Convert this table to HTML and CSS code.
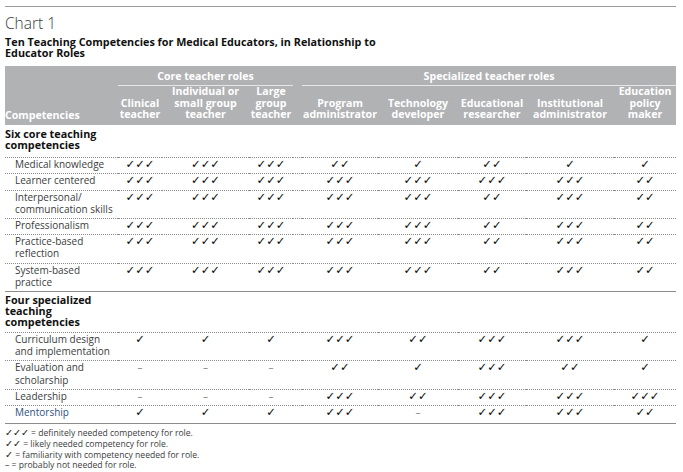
FILE: index.html
```html
<!DOCTYPE html>
<html lang="en">
<head>
<meta charset="utf-8">
<title>Chart 1</title>
<link rel="stylesheet" href="styles.css">
</head>
<body>
<div class="page">
  <div class="rule-top"></div>
  <h1 class="chart-label">Chart 1</h1>
  <h2 class="chart-title">Ten Teaching Competencies for Medical Educators, in Relationship to<br>Educator Roles</h2>
  <table class="comp-table">
    <colgroup>
      <col class="w-comp">
      <col class="w-clin">
      <col class="w-indiv">
      <col class="w-large">
      <col class="w-gap">
      <col class="w-prog">
      <col class="w-tech">
      <col class="w-edu">
      <col class="w-inst">
      <col class="w-policy">
    </colgroup>
    <thead>
      <tr class="group-row">
        <th rowspan="2" class="h-comp">Competencies</th>
        <th colspan="3" class="h-group">Core teacher roles</th>
        <th rowspan="2" class="h-gap"></th>
        <th colspan="5" class="h-group">Specialized teacher roles</th>
      </tr>
      <tr class="role-row">
        <th class="h-role">Clinical<br>teacher</th>
        <th class="h-role">Individual or<br>small group<br>teacher</th>
        <th class="h-role">Large<br>group<br>teacher</th>
        <th class="h-role">Program<br>administrator</th>
        <th class="h-role">Technology<br>developer</th>
        <th class="h-role">Educational<br>researcher</th>
        <th class="h-role">Institutional<br>administrator</th>
        <th class="h-role">Education<br>policy<br>maker</th>
      </tr>
    </thead>
    <tbody>
      <tr class="section first">
        <th colspan="10">Six core teaching<br>competencies</th>
      </tr>
      <tr>
        <td class="label">Medical knowledge</td>
        <td class="mark">✓✓✓</td><td class="mark">✓✓✓</td><td class="mark">✓✓✓</td><td class="gap"></td>
        <td class="mark">✓✓</td><td class="mark">✓</td><td class="mark">✓✓</td><td class="mark">✓</td><td class="mark">✓</td>
      </tr>
      <tr>
        <td class="label">Learner centered</td>
        <td class="mark">✓✓✓</td><td class="mark">✓✓✓</td><td class="mark">✓✓✓</td><td class="gap"></td>
        <td class="mark">✓✓✓</td><td class="mark">✓✓✓</td><td class="mark">✓✓✓</td><td class="mark">✓✓✓</td><td class="mark">✓✓</td>
      </tr>
      <tr>
        <td class="label">Interpersonal/<br>communication skills</td>
        <td class="mark">✓✓✓</td><td class="mark">✓✓✓</td><td class="mark">✓✓✓</td><td class="gap"></td>
        <td class="mark">✓✓✓</td><td class="mark">✓✓✓</td><td class="mark">✓✓</td><td class="mark">✓✓✓</td><td class="mark">✓✓</td>
      </tr>
      <tr>
        <td class="label">Professionalism</td>
        <td class="mark">✓✓✓</td><td class="mark">✓✓✓</td><td class="mark">✓✓✓</td><td class="gap"></td>
        <td class="mark">✓✓✓</td><td class="mark">✓✓✓</td><td class="mark">✓✓</td><td class="mark">✓✓✓</td><td class="mark">✓✓</td>
      </tr>
      <tr>
        <td class="label">Practice-based<br>reflection</td>
        <td class="mark">✓✓✓</td><td class="mark">✓✓✓</td><td class="mark">✓✓✓</td><td class="gap"></td>
        <td class="mark">✓✓✓</td><td class="mark">✓✓✓</td><td class="mark">✓✓</td><td class="mark">✓✓✓</td><td class="mark">✓✓</td>
      </tr>
      <tr>
        <td class="label">System-based<br>practice</td>
        <td class="mark">✓✓✓</td><td class="mark">✓✓✓</td><td class="mark">✓✓✓</td><td class="gap"></td>
        <td class="mark">✓✓✓</td><td class="mark">✓✓✓</td><td class="mark">✓✓</td><td class="mark">✓✓✓</td><td class="mark">✓✓</td>
      </tr>
      <tr class="section second">
        <th colspan="10">Four specialized<br>teaching<br>competencies</th>
      </tr>
      <tr>
        <td class="label">Curriculum design<br>and implementation</td>
        <td class="mark">✓</td><td class="mark">✓</td><td class="mark">✓</td><td class="gap"></td>
        <td class="mark">✓✓✓</td><td class="mark">✓✓</td><td class="mark">✓✓✓</td><td class="mark">✓✓✓</td><td class="mark">✓</td>
      </tr>
      <tr>
        <td class="label">Evaluation and<br>scholarship</td>
        <td class="mark dash">–</td><td class="mark dash">–</td><td class="mark dash">–</td><td class="gap"></td>
        <td class="mark">✓✓</td><td class="mark">✓</td><td class="mark">✓✓✓</td><td class="mark">✓✓</td><td class="mark">✓</td>
      </tr>
      <tr>
        <td class="label">Leadership</td>
        <td class="mark dash">–</td><td class="mark dash">–</td><td class="mark dash">–</td><td class="gap"></td>
        <td class="mark">✓✓✓</td><td class="mark">✓✓</td><td class="mark">✓✓✓</td><td class="mark">✓✓✓</td><td class="mark">✓✓✓</td>
      </tr>
      <tr class="last">
        <td class="label accent">Mentorship</td>
        <td class="mark">✓</td><td class="mark">✓</td><td class="mark">✓</td><td class="gap"></td>
        <td class="mark">✓✓✓</td><td class="mark dash">–</td><td class="mark">✓✓✓</td><td class="mark">✓✓✓</td><td class="mark">✓✓</td>
      </tr>
    </tbody>
  </table>
  <div class="notes">
    <p><span class="sym">✓✓✓</span> = definitely needed competency for role.</p>
    <p><span class="sym">✓✓</span> = likely needed competency for role.</p>
    <p><span class="sym">✓</span> = familiarity with competency needed for role.</p>
    <p>– = probably not needed for role.</p>
  </div>
</div>
</body>
</html>
```

FILE: styles.css
```css
* {
  box-sizing: border-box;
  margin: 0;
  padding: 0;
}

body {
  margin: 0;
  background: #ffffff;
  font-family: "Open Sans", "Liberation Sans", sans-serif;
  color: #222222;
}

.page {
  padding: 6px 0 0 5px;
  width: 683px;
}

.rule-top {
  width: 671px;
  border-top: 1px solid #9a9a9a;
}

.chart-label {
  margin-top: 8px;
  font-size: 15.5px;
  line-height: 16px;
  font-weight: 300;
  color: #3a3a3a;
}

.chart-title {
  margin-top: 5px;
  font-size: 10.8px;
  line-height: 11px;
  font-weight: 700;
  color: #111111;
}

.comp-table {
  margin-top: 8px;
  width: 671px;
  table-layout: fixed;
  border-collapse: separate;
  border-spacing: 0;
}

.w-comp { width: 113px; }
.w-clin { width: 44px; }
.w-indiv { width: 87px; }
.w-large { width: 44px; }
.w-gap { width: 9px; }
.w-prog { width: 76px; }
.w-tech { width: 80px; }
.w-edu { width: 68px; }
.w-inst { width: 88px; }
.w-policy { width: 62px; }

.comp-table thead th {
  background: #b1b2b4;
  color: #ffffff;
  font-size: 10.6px;
  font-weight: 700;
  white-space: nowrap;
}

.h-group {
  padding: 4px 0 3px;
  line-height: 12px;
  text-align: center;
  border-bottom: 1px solid #e6e6e6;
}

.h-comp {
  text-align: left;
  vertical-align: bottom;
  line-height: 12px;
  padding-bottom: 4px;
}

.h-role {
  text-align: center;
  vertical-align: bottom;
  line-height: 11.7px;
  padding-bottom: 4px;
}

.section th {
  text-align: left;
  font-size: 10.8px;
  font-weight: 700;
  line-height: 11px;
  color: #111111;
}

.section.first th {
  padding: 3px 0 7px;
}

.section.second th {
  padding: 2px 0 5px;
  border-top: 1px solid #8c8c8c;
}

.comp-table tbody td {
  border-top: 1px dotted #8a8a8a;
  vertical-align: top;
  line-height: 12.2px;
  padding: 0 0 3px;
}

.comp-table tbody tr.last td {
  padding-bottom: 5px;
  border-bottom: 1px solid #8c8c8c;
}

.label {
  padding-left: 10px !important;
  font-size: 10px;
  color: #3c3c3c;
}

.label.accent {
  color: #2f4f80;
}

.mark {
  text-align: center;
  font-family: "DejaVu Sans", sans-serif;
  font-size: 11.5px;
  color: #0e0e0e;
}

.mark.dash {
  font-family: "Open Sans", sans-serif;
  font-size: 10px;
  color: #888888;
}

.notes {
  margin-top: 4px;
  font-size: 8.6px;
  line-height: 10.7px;
  color: #3c3c3c;
}

.notes .sym {
  font-family: "DejaVu Sans", sans-serif;
  font-size: 9.5px;
  color: #1e1e1e;
}
```
